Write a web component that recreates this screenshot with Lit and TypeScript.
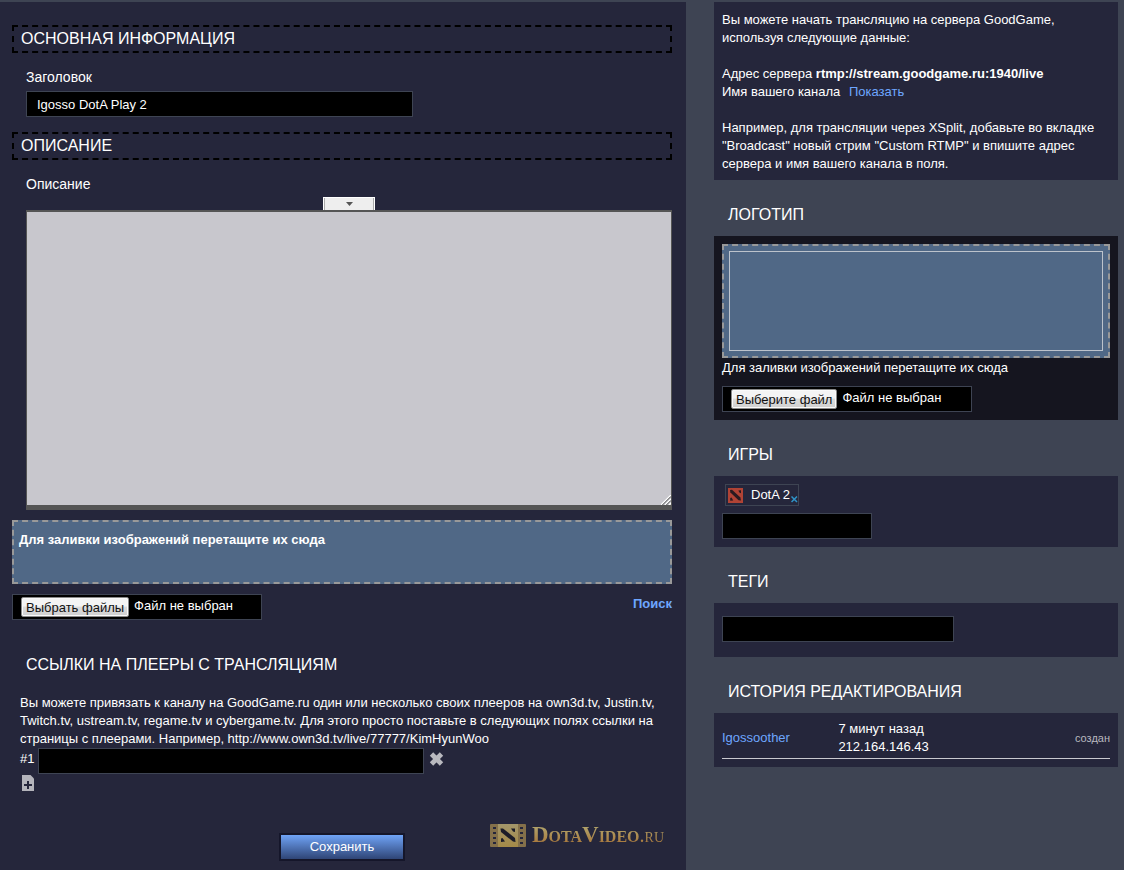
import { LitElement, html, css, svg } from "lit";
import { customElement, property } from "lit/decorators.js";

/** Styles shared by every element of the channel editor. */
const base = css`
  *,
  *::before,
  *::after {
    box-sizing: border-box;
  }
  a {
    color: #6ea6ff;
    text-decoration: none;
  }
  p,
  h2 {
    margin: 0;
  }
  button {
    padding: 0;
    border: 0;
    background: none;
    font: inherit;
    color: inherit;
    cursor: pointer;
  }
  .field {
    display: block;
    height: 26px;
    padding: 0 10px;
    border: 1px solid #3e4453;
    border-radius: 0;
    background: #000;
    color: #fff;
    font: inherit;
    outline: none;
  }
  .title {
    font-size: 16px;
    line-height: 18px;
    font-weight: normal;
    text-transform: uppercase;
  }
  .drop {
    border: 2px dashed #999;
    background: #506886;
  }
`;

/** File input with its own caption and status text. */
@customElement("file-picker")
export class FilePicker extends LitElement {
  @property() caption = "";
  @property({ type: Boolean }) multiple = false;

  static styles = [
    base,
    css`
      :host {
        display: block;
        width: 250px;
      }
      .box {
        position: relative;
        display: flex;
        align-items: flex-start;
        gap: 5px;
        height: 26px;
        padding: 2px 8px;
        border: 1px solid #3e4453;
        background: #000;
      }
      .native {
        position: absolute;
        inset: 0;
        width: 100%;
        height: 100%;
        opacity: 0;
        cursor: pointer;
      }
      .push {
        height: 20px;
        padding: 0 4px;
        border: 1px solid #8a8a8a;
        border-radius: 2px;
        background: linear-gradient(#f4f4f4 0 45%, #dcdcdc 50%, #d0d0d0);
        box-shadow: inset 0 0 0 1px #fafafa;
        color: #111;
        line-height: 19px;
        white-space: nowrap;
      }
      .status {
        line-height: 18px;
        white-space: nowrap;
      }
    `,
  ];

  render() {
    return html`<label class="box">
      <span class="push">${this.caption}</span>
      <span class="status">Файл не выбран</span>
      <input class="native" type="file" ?multiple=${this.multiple} />
    </label>`;
  }
}

const dotaMark = svg`
  <rect width="15" height="15" fill="#b04335"/>
  <path d="M2 2 4 1.8 12.4 9.4 13 12.6 10.6 12.2 2.4 4.4Z" fill="#2a1a20"/>
  <path d="M10.4 2.4 13 2.2 13 5.2 11.4 4.6Z" fill="#2a1a20"/>
  <path d="M2.2 10 3.6 9.6 5.2 12.4 2.2 12.8Z" fill="#2a1a20"/>
`;

@customElement("side-column")
export class SideColumn extends LitElement {
  static styles = [
    base,
    css`
      :host {
        display: block;
      }
      .panel {
        padding: 8px;
        background: #25263b;
      }
      .intro {
        padding: 9px 8px 7px;
      }
      .logo {
        background: #15151f;
      }
      .tags {
        padding: 13px 8px 15px;
      }
      .history {
        padding-top: 7px;
      }
      .title {
        padding: 26px 14px 12px;
      }
      .show {
        margin-left: 5px;
      }
      .gap {
        margin-top: 18px;
      }
      .drop {
        padding: 5px;
      }
      .preview {
        height: 100px;
        border: 1px solid #bcc3cc;
      }
      .hint {
        padding-top: 1px;
      }
      .picker {
        margin-top: 9px;
      }
      .chip {
        position: relative;
        display: flex;
        align-items: center;
        gap: 8px;
        width: fit-content;
        height: 22px;
        margin: 0 0 7px 3px;
        padding: 0 8px 0 2px;
        border: 1px solid #3e4453;
      }
      .chip svg {
        display: block;
      }
      .drop-chip {
        position: absolute;
        right: 0;
        bottom: 2px;
        width: 7px;
        height: 7px;
      }
      .game {
        width: 150px;
      }
      .tag {
        width: 232px;
      }
      .log {
        width: 100%;
        border-spacing: 0;
      }
      .log td {
        padding: 0 0 2px;
        border-bottom: 1px solid #c9c9cf;
      }
      .who {
        width: 30%;
      }
      .what {
        font-size: 11px;
        color: #b8b8bf;
        text-align: right;
      }
    `,
  ];

  render() {
    return html`
      <section class="panel intro">
        <p>Вы можете начать трансляцию на сервера GoodGame, используя следующие данные:</p>
        <p class="gap">Адрес сервера <b>rtmp://stream.goodgame.ru:1940/live</b></p>
        <p>Имя вашего канала <a class="show" href="#">Показать</a></p>
        <p class="gap">
          Например, для трансляции через XSplit, добавьте во вкладке "Broadcast" новый стрим
          "Custom RTMP" и впишите адрес сервера и имя вашего канала в поля.
        </p>
      </section>

      <h2 class="title">Логотип</h2>
      <section class="panel logo">
        <div class="drop"><div class="preview"></div></div>
        <p class="hint">Для заливки изображений перетащите их сюда</p>
        <file-picker class="picker" caption="Выберите файл"></file-picker>
      </section>

      <h2 class="title">Игры</h2>
      <section class="panel">
        <div class="chip">
          <svg width="15" height="15" viewBox="0 0 15 15" aria-hidden="true">${dotaMark}</svg>
          <span>DotA 2</span>
          <button class="drop-chip" type="button" aria-label="Убрать">
            <svg width="7" height="7" viewBox="0 0 7 7">
              <path d="M0.5 0.5 6 6M6 0.5 0.5 6" stroke="#2f93c8" stroke-width="1.5" />
            </svg>
          </button>
        </div>
        <input class="field game" type="text" aria-label="Игры" />
      </section>

      <h2 class="title">Теги</h2>
      <section class="panel tags">
        <input class="field tag" type="text" aria-label="Теги" />
      </section>

      <h2 class="title">История редактирования</h2>
      <section class="panel history">
        <table class="log">
          <tr>
            <td class="who"><a href="#">Igossoother</a></td>
            <td>7 минут назад<br />212.164.146.43</td>
            <td class="what">создан</td>
          </tr>
        </table>
      </section>
    `;
  }
}

@customElement("channel-form")
export class ChannelForm extends LitElement {
  static styles = [
    base,
    css`
      :host {
        display: block;
        padding: 23px 14px 8px 12px;
        background: #25263b;
      }
      .boxed {
        padding: 3px 7px;
        border: 2px dashed #000;
      }
      .group {
        padding: 15px 0 15px 14px;
      }
      .label {
        display: block;
        margin-bottom: 5px;
        font-size: 14px;
      }
      .wide {
        width: 387px;
      }
      .editor {
        display: flex;
        flex-direction: column;
        align-items: center;
        padding: 15px 0 10px 14px;
      }
      .editor .label {
        align-self: stretch;
        margin-bottom: 4px;
      }
      .fold {
        display: grid;
        place-items: center;
        width: 52px;
        height: 13px;
        border: 1px solid #fff;
        border-bottom: 0;
        background: #eee;
        box-shadow: inset 1px 0 #aaa, inset -1px 0 #aaa;
      }
      .text {
        display: block;
        width: 100%;
        height: 300px;
        padding: 8px;
        border: solid #555;
        border-width: 2px 1px 5px;
        border-radius: 0;
        background: #c8c7cd;
        color: #222;
        font: inherit;
        outline: none;
        resize: none;
      }
      .frame {
        position: relative;
        width: 100%;
      }
      .grip {
        position: absolute;
        right: 1px;
        bottom: 5px;
      }
      .upload {
        height: 64px;
        padding: 9px 5px;
        font-weight: bold;
      }
      .files {
        display: flex;
        justify-content: space-between;
        margin-top: 10px;
      }
      .search {
        padding-top: 1px;
        font-weight: bold;
      }
      .links {
        margin: 36px 14px 20px;
      }
      .players {
        padding-left: 8px;
      }
      .row {
        display: flex;
        align-items: center;
        gap: 5px;
      }
      .row .wide {
        width: 386px;
      }
      .num {
        width: 13px;
        padding-bottom: 4px;
      }
      .row svg,
      .add svg {
        display: block;
      }
      .kill {
        padding-bottom: 4px;
      }
      .add {
        display: block;
        margin: 1px 0 0 2px;
      }
      .foot {
        display: grid;
        grid-template-columns: 1fr 126px 1fr;
        align-items: end;
        margin-top: 32px;
      }
      .save {
        grid-column: 2;
        height: 28px;
        border: 2px solid #15162a;
        background: linear-gradient(#6fa3f6, #2f4576);
        color: #fff;
        line-height: 24px;
      }
      .brand {
        display: flex;
        gap: 6px;
        justify-self: end;
        align-items: center;
        padding: 0 8px 14px 0;
      }
      .word {
        font: bold 23px/24px "Liberation Serif", "Times New Roman", serif;
        font-variant: small-caps;
        color: transparent;
        background: linear-gradient(#b0a068 20%, #a8783c 85%);
        background-clip: text;
        -webkit-background-clip: text;
      }
      .zone {
        font-size: 20px;
        font-weight: normal;
      }
    `,
  ];

  render() {
    return html`
      <h2 class="title boxed">Основная информация</h2>
      <div class="group">
        <label class="label" for="name">Заголовок</label>
        <input class="field wide" id="name" type="text" .value=${"Igosso DotA Play 2"} />
      </div>

      <h2 class="title boxed">Описание</h2>
      <div class="editor">
        <label class="label" for="about">Описание</label>
        <button class="fold" type="button" aria-label="Развернуть">
          <svg width="7" height="4" viewBox="0 0 7 4"><path d="M0 0H7L3.5 4Z" fill="#555" /></svg>
        </button>
        <div class="frame">
          <textarea class="text" id="about"></textarea>
          <svg class="grip" width="10" height="10" viewBox="0 0 10 10" aria-hidden="true">
            <path d="M0 10 10 0M4 10 10 4M8 10 10 8" stroke="#fff" stroke-width="1.3" />
            <path d="M1.4 10 10 1.4M5.4 10 10 5.4" stroke="#555" stroke-width="1" />
          </svg>
        </div>
      </div>

      <div class="drop upload">Для заливки изображений перетащите их сюда</div>
      <div class="files">
        <file-picker caption="Выбрать файлы" multiple></file-picker>
        <a class="search" href="#">Поиск</a>
      </div>

      <h2 class="title links">Ссылки на плееры с трансляциям</h2>
      <div class="players">
        <p>
          Вы можете привязать к каналу на GoodGame.ru один или несколько своих плееров на own3d.tv,
          Justin.tv, Twitch.tv, ustream.tv, regame.tv и cybergame.tv. Для этого просто поставьте в
          следующих полях ссылки на страницы с плеерами. Например,
          http://www.own3d.tv/live/77777/KimHyunWoo
        </p>
        <div class="row">
          <label class="num" for="player">#1</label>
          <input class="field wide" id="player" type="text" />
          <button class="kill" type="button" aria-label="Удалить">
            <svg width="15" height="16" viewBox="0 0 15 16">
              <path d="M2.5 3 12.5 13M12.5 3 2.5 13" stroke="#b9b9bf" stroke-width="4.8" />
            </svg>
          </button>
        </div>
        <button class="add" type="button" aria-label="Добавить">
          <svg width="12" height="16" viewBox="0 0 12 16">
            <path d="M0 0H8.5L12 3.5V16H0Z" fill="#b4b4bb" />
            <path d="M6 6V14M2 10H10" stroke="#25263b" stroke-width="2" />
          </svg>
        </button>
      </div>

      <div class="foot">
        <button class="save" type="button">Сохранить</button>
        <div class="brand">
          <svg width="36" height="23" viewBox="0 0 36 23" aria-hidden="true">
            <defs>
              <linearGradient id="gold" x2="0" y2="1">
                <stop stop-color="#a3966a" />
                <stop offset="1" stop-color="#a58a48" />
              </linearGradient>
            </defs>
            <rect width="36" height="23" rx="1" fill="#84704a" />
            <rect x="8" width="20" height="23" fill="url(#gold)" />
            <path
              d="M3 3H6V5H3ZM3 8H6V10H3ZM3 13H6V15H3ZM3 18H6V20H3ZM30 3H33V5H30ZM30 8H33V10H30ZM30 13H33V15H30ZM30 18H33V20H30Z"
              fill="#25263b"
            />
            <path d="M10.500 4.500 13 4.500 25 14 25.500 18 23 17.500 11 8Z" fill="#1c1c28" />
            <path d="M21 4.500 25 4.500 25 8 23 7.500Z" fill="#1c1c28" />
            <path d="M11 14.500 12.500 14 15 17.500 11 18Z" fill="#1c1c28" />
          </svg>
          <span class="word">DotaVideo<span class="zone">.ru</span></span>
        </div>
      </div>
    `;
  }
}

@customElement("app-root")
export class AppRoot extends LitElement {
  static styles = css`
    :host {
      box-sizing: border-box;
      display: grid;
      grid-template-columns: minmax(0, 1fr) 404px;
      gap: 28px;
      min-height: 100vh;
      padding: 2px 6px 0 0;
      background: #3e4453;
      color: #fff;
      font: 13px/18px "Liberation Sans", Arial, sans-serif;
    }
  `;

  render() {
    return html`<channel-form></channel-form><side-column></side-column>`;
  }
}
